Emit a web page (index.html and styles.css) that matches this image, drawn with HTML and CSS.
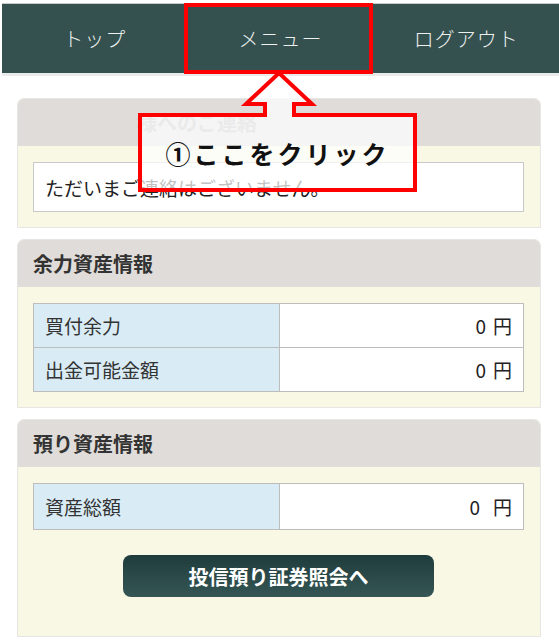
FILE: index.html
```html
<!DOCTYPE html>
<html>
<head>
  <title>マイページ</title>
  <meta charset="UTF-8">
  <meta name="viewport" content="width=device-width, initial-scale=1.0">
  <link rel="stylesheet" href="styles.css">
</head>
<body>
  <div class="nav">
    <div class="nav-item">トップ</div>
    <div class="nav-item">メニュー</div>
    <div class="nav-item">ログアウト</div>
  </div>

  <div class="content">
    <div class="card">
      <div class="card-head faded"><span class="name-mask"></span>様へのご連絡</div>
      <div class="card-body">
        <div class="notice">ただいまご連絡はございません。</div>
      </div>
    </div>

    <div class="card">
      <div class="card-head">余力資産情報</div>
      <div class="card-body">
        <table class="info">
          <tr><th>買付余力</th><td>0<span class="yen">円</span></td></tr>
          <tr><th>出金可能金額</th><td>0<span class="yen">円</span></td></tr>
        </table>
      </div>
    </div>

    <div class="card">
      <div class="card-head">預り資産情報</div>
      <div class="card-body last">
        <table class="info tall">
          <tr><th>資産総額</th><td>0<span class="yen wide">円</span></td></tr>
        </table>
        <div class="btn-wrap">
          <div class="btn">投信預り証券照会へ</div>
        </div>
      </div>
    </div>
  </div>

  <!-- 説明用の注記 -->
  <div class="mark-box"></div>
  <svg class="callout" width="559" height="200" viewBox="0 0 559 200">
    <path d="M140,115 L265,115 L265,104 L246,104 L279,73 L312,104 L294,104 L294,115 L415,115 L415,190 L140,190 Z"
      fill="rgba(255,255,255,0.72)" stroke="#ff0000" stroke-width="4" stroke-linejoin="miter"/>
  </svg>
  <div class="callout-text">①ここをクリック</div>
</body>
</html>
```

FILE: styles.css
```css
body {
  margin: 0;
  font-family: "Noto Sans CJK JP", "Noto Sans", sans-serif;
  background-color: #fff;
  color: #333;
}
.nav {
  display: flex;
  margin: 3px 0 0 2px;
  height: 69px;
  background-color: #34514f;
  border-top: 1px solid #c8cccc;
  border-bottom: 3px solid #e9eaea;
}
.nav-item {
  flex: 1;
  display: flex;
  justify-content: center;
  align-items: center;
  color: #eef0ef;
  font-size: 20px;
  font-weight: 300;
  letter-spacing: 1px;
}
.content {
  padding: 22px 18px 0 17px;
}
.card {
  border: 1px solid #e6e6e2;
  border-radius: 7px 7px 0 0;
  overflow: hidden;
  margin-bottom: 11px;
  background-color: #f8f8e4;
}
.card-head {
  height: 47px;
  display: flex;
  align-items: center;
  padding-left: 15px;
  background-color: #dfdcd9;
  font-size: 20px;
  font-weight: bold;
  color: #333;
}
.card-head.faded {
  color: #b3b3b3;
}
.name-mask {
  display: inline-block;
  width: 104px;
}
.card-body {
  padding: 16px 16px 15px 15px;
}
.card-body.last {
  padding-bottom: 39px;
}
.notice {
  border: 1px solid #c9c9c9;
  background-color: #fff;
  height: 48px;
  display: flex;
  align-items: center;
  padding-left: 11px;
  font-size: 19px;
  color: #222;
}
.info {
  width: 100%;
  border-collapse: collapse;
  font-size: 19px;
}
.info th, .info td {
  border: 1px solid #bdbdbd;
  height: 43px;
  padding: 0 11px;
  font-weight: normal;
}
.info th {
  width: 223px;
  text-align: left;
  background-color: #d9ecf5;
  color: #333;
}
.info td {
  text-align: right;
  background-color: #fff;
  color: #222;
}
.yen {
  margin-left: 7px;
}
.yen.wide {
  margin-left: 13px;
}
.info.tall th, .info.tall td {
  height: 45px;
}
.btn-wrap {
  display: flex;
  justify-content: center;
  margin-top: 25px;
}
.btn {
  width: 311px;
  height: 42px;
  border-radius: 8px;
  background: linear-gradient(#1f3c3c, #355654);
  color: #fff;
  font-size: 20px;
  font-weight: bold;
  display: flex;
  justify-content: center;
  align-items: center;
}
.mark-box {
  position: absolute;
  left: 184px;
  top: 3px;
  width: 181px;
  height: 63px;
  border: 4px solid #ff0000;
}
.callout {
  position: absolute;
  left: 0;
  top: 0;
  pointer-events: none;
}
.callout-text {
  position: absolute;
  left: 140px;
  top: 115px;
  width: 275px;
  height: 75px;
  display: flex;
  justify-content: center;
  align-items: center;
  font-size: 25px;
  font-weight: bold;
  letter-spacing: 3px;
  color: #111;
}
```
